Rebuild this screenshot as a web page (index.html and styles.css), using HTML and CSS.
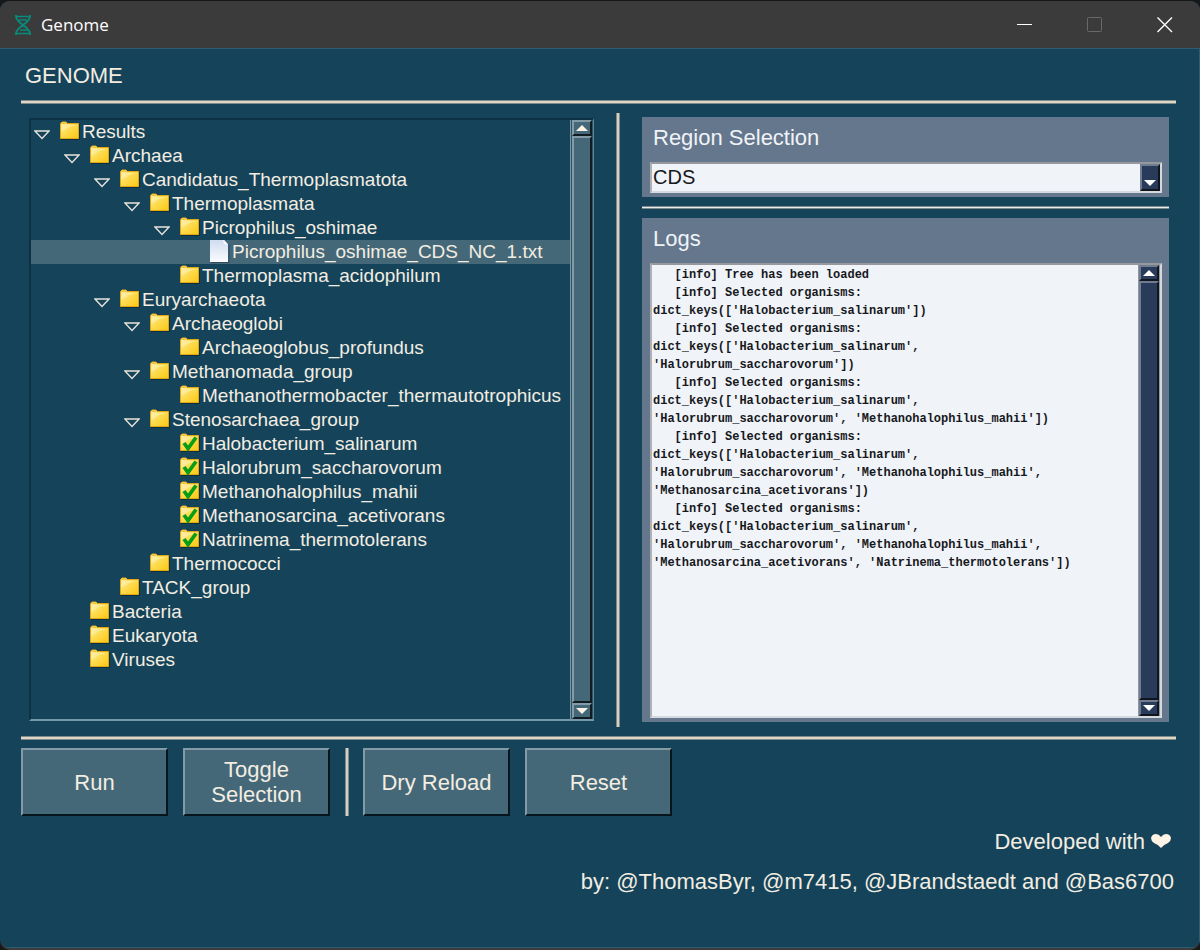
FILE: index.html
```
<!DOCTYPE html>
<html lang="en">
<head>
<meta charset="utf-8">
<meta name="viewport" content="width=device-width, initial-scale=1">
<title>Genome</title>
<link rel="stylesheet" href="styles.css">
</head>
<body>
<svg class="defs" aria-hidden="true">
  <defs>
    <linearGradient id="gold" x1="0" y1="0" x2="1" y2="1">
      <stop offset="0" stop-color="#fff0ad"/>
      <stop offset=".45" stop-color="#fddc55"/>
      <stop offset="1" stop-color="#fcc70f"/>
    </linearGradient>
    <linearGradient id="paper" x1="0" y1="0" x2="0" y2="1">
      <stop offset="0" stop-color="#cfdcf0"/>
      <stop offset="1" stop-color="#fbfcff"/>
    </linearGradient>
    <symbol id="folder" viewBox="0 0 20 24">
      <path d="M1 19.500H19.500V4" fill="none" stroke="#0d2f40"/>
      <path d="M.5 18.500V3.500L2 2H6L7.500 3.500H18.500V18.500Z" fill="url(#gold)" stroke="#e3a712"/>
      <path d="M1 2.500H6.500V4H1Z" fill="#f3c545"/>
      <path d="M1 11V6Q1 5 2 5H18Q10 6 7 8.500T1 11Z" fill="#fff3b5" opacity=".55"/>
    </symbol>
    <symbol id="checked" viewBox="0 0 20 24">
      <use href="#folder" width="20" height="24"/>
      <path d="M4 11L8 16.500L16 5.500" fill="none" stroke="#089d17" stroke-width="3.700"/>
    </symbol>
    <symbol id="file" viewBox="0 0 20 24">
      <path d="M1 22.500H19V4" fill="none" stroke="#30485a"/>
      <path d="M0 0H14L18 4V22H0Z" fill="url(#paper)"/>
      <path d="M13 0L14 4L18 5L14 0Z" fill="#f6f9ff"/>
    </symbol>
    <symbol id="open" viewBox="0 0 16 10">
      <path d="M1 1H15L8 8.500Z" fill="none" stroke="#e8e4dc" stroke-width="1.300"/>
    </symbol>
    <symbol id="up" viewBox="0 0 12 6"><path d="M0 6L6 0L12 6Z" fill="currentColor"/></symbol>
    <symbol id="down" viewBox="0 0 12 6"><path d="M0 0H12L6 6Z" fill="currentColor"/></symbol>
  </defs>
</svg>
<div class="window">
  <header class="titlebar">
    <svg class="dna" viewBox="0 0 16 20" fill="none" stroke="#078d7b" stroke-width="1.700" aria-hidden="true">
      <path d="M1 0V2Q2 6 8 10T15 18V20M15 0V2Q14 6 8 10T1 18V20M1 1.500H15M4 5H12M5 15H13M1 18.500H15"/>
    </svg>
    <span class="caption">Genome</span>
    <div class="controls">
      <button type="button" aria-label="Minimize"><svg viewBox="0 0 16 16"><path d="M0 7.500H15" stroke="#fff"/></svg></button>
      <button type="button" aria-label="Maximize" disabled><svg viewBox="0 0 16 16"><rect x=".5" y=".5" width="14" height="14" rx="1" fill="none" stroke="#696969"/></svg></button>
      <button type="button" aria-label="Close"><svg viewBox="0 0 16 16"><path d="M.5 .5L15 15M15 .5L.5 15" stroke="#fff" stroke-width="1.400"/></svg></button>
    </div>
  </header>

  <div class="content">
    <h1>GENOME</h1>
    <div class="rule"></div>
    <main class="workspace">
      <div class="treebox">
        <ul class="tree" role="tree" aria-label="Results">
          <li role="treeitem" class="d0"><svg class="arrow"><use href="#open"/></svg><svg class="icon"><use href="#folder"/></svg>Results</li>
          <li role="treeitem" class="d1"><svg class="arrow"><use href="#open"/></svg><svg class="icon"><use href="#folder"/></svg>Archaea</li>
          <li role="treeitem" class="d2"><svg class="arrow"><use href="#open"/></svg><svg class="icon"><use href="#folder"/></svg>Candidatus_Thermoplasmatota</li>
          <li role="treeitem" class="d3"><svg class="arrow"><use href="#open"/></svg><svg class="icon"><use href="#folder"/></svg>Thermoplasmata</li>
          <li role="treeitem" class="d4"><svg class="arrow"><use href="#open"/></svg><svg class="icon"><use href="#folder"/></svg>Picrophilus_oshimae</li>
          <li role="treeitem" class="d5 selected" aria-selected="true"><svg class="arrow"></svg><svg class="icon"><use href="#file"/></svg>Picrophilus_oshimae_CDS_NC_1.txt</li>
          <li role="treeitem" class="d4"><svg class="arrow"></svg><svg class="icon"><use href="#folder"/></svg>Thermoplasma_acidophilum</li>
          <li role="treeitem" class="d2"><svg class="arrow"><use href="#open"/></svg><svg class="icon"><use href="#folder"/></svg>Euryarchaeota</li>
          <li role="treeitem" class="d3"><svg class="arrow"><use href="#open"/></svg><svg class="icon"><use href="#folder"/></svg>Archaeoglobi</li>
          <li role="treeitem" class="d4"><svg class="arrow"></svg><svg class="icon"><use href="#folder"/></svg>Archaeoglobus_profundus</li>
          <li role="treeitem" class="d3"><svg class="arrow"><use href="#open"/></svg><svg class="icon"><use href="#folder"/></svg>Methanomada_group</li>
          <li role="treeitem" class="d4"><svg class="arrow"></svg><svg class="icon"><use href="#folder"/></svg>Methanothermobacter_thermautotrophicus</li>
          <li role="treeitem" class="d3"><svg class="arrow"><use href="#open"/></svg><svg class="icon"><use href="#folder"/></svg>Stenosarchaea_group</li>
          <li role="treeitem" class="d4"><svg class="arrow"></svg><svg class="icon"><use href="#checked"/></svg>Halobacterium_salinarum</li>
          <li role="treeitem" class="d4"><svg class="arrow"></svg><svg class="icon"><use href="#checked"/></svg>Halorubrum_saccharovorum</li>
          <li role="treeitem" class="d4"><svg class="arrow"></svg><svg class="icon"><use href="#checked"/></svg>Methanohalophilus_mahii</li>
          <li role="treeitem" class="d4"><svg class="arrow"></svg><svg class="icon"><use href="#checked"/></svg>Methanosarcina_acetivorans</li>
          <li role="treeitem" class="d4"><svg class="arrow"></svg><svg class="icon"><use href="#checked"/></svg>Natrinema_thermotolerans</li>
          <li role="treeitem" class="d3"><svg class="arrow"></svg><svg class="icon"><use href="#folder"/></svg>Thermococci</li>
          <li role="treeitem" class="d2"><svg class="arrow"></svg><svg class="icon"><use href="#folder"/></svg>TACK_group</li>
          <li role="treeitem" class="d1"><svg class="arrow"></svg><svg class="icon"><use href="#folder"/></svg>Bacteria</li>
          <li role="treeitem" class="d1"><svg class="arrow"></svg><svg class="icon"><use href="#folder"/></svg>Eukaryota</li>
          <li role="treeitem" class="d1"><svg class="arrow"></svg><svg class="icon"><use href="#folder"/></svg>Viruses</li>
        </ul>
        <div class="scrollbar">
          <button type="button" aria-label="Scroll tree up"><svg><use href="#up"/></svg></button>
          <div class="thumb"></div>
          <button type="button" aria-label="Scroll tree down"><svg><use href="#down"/></svg></button>
        </div>
      </div>

      <div class="divider"></div>

      <div class="side">
        <section class="panel">
          <label for="region">Region Selection</label>
          <div class="combo">
            <select id="region"><option>CDS</option></select>
            <span class="drop"><svg><use href="#down"/></svg></span>
          </div>
        </section>
        <div class="rule cool"></div>
        <section class="panel logs">
          <label for="log">Logs</label>
          <div class="logbox">
            <textarea id="log" readonly spellcheck="false">
   [info] Tree has been loaded
   [info] Selected organisms:
dict_keys(['Halobacterium_salinarum'])
   [info] Selected organisms:
dict_keys(['Halobacterium_salinarum',
'Halorubrum_saccharovorum'])
   [info] Selected organisms:
dict_keys(['Halobacterium_salinarum',
'Halorubrum_saccharovorum', 'Methanohalophilus_mahii'])
   [info] Selected organisms:
dict_keys(['Halobacterium_salinarum',
'Halorubrum_saccharovorum', 'Methanohalophilus_mahii',
'Methanosarcina_acetivorans'])
   [info] Selected organisms:
dict_keys(['Halobacterium_salinarum',
'Halorubrum_saccharovorum', 'Methanohalophilus_mahii',
'Methanosarcina_acetivorans', 'Natrinema_thermotolerans'])</textarea>
            <div class="scrollbar navy">
              <button type="button" aria-label="Scroll logs up"><svg><use href="#up"/></svg></button>
              <div class="thumb"></div>
              <button type="button" aria-label="Scroll logs down"><svg><use href="#down"/></svg></button>
            </div>
          </div>
        </section>
      </div>
    </main>
    <div class="rule"></div>
    <div class="actions">
      <button type="button">Run</button>
      <button type="button">Toggle Selection</button>
      <div class="divider"></div>
      <button type="button">Dry Reload</button>
      <button type="button">Reset</button>
    </div>
    <footer>
      <p class="love">Developed with <svg viewBox="0 0 20 14" role="img" aria-label="love"><path d="M10 14Q8 11 3 9Q0 7 0 4Q1 0 5 0Q8 0 10 3Q12 0 15 0Q19 0 20 4Q20 7 17 9Q12 11 10 14Z" fill="#fdf4e6"/></svg></p>
      <p>by: @ThomasByr, @m7415, @JBrandstaedt and @Bas6700</p>
    </footer>
  </div>
</div>
</body>
</html>
```
FILE: styles.css
```
* { box-sizing: border-box; }

body {
  margin: 0;
  background: #17181a;
  color: #f3ede2;
  font: 22px/25px "Liberation Sans", Arial, sans-serif;
}

button, select, textarea { margin: 0; border-radius: 0; font: inherit; color: inherit; }

.defs { position: absolute; width: 0; height: 0; }

.window {
  display: flex;
  flex-direction: column;
  min-height: 100vh;
  border-top: 1px solid #17181a;
  border-bottom: 2px solid #3b3b3b;
  border-radius: 10px;
  overflow: hidden;
  background: #15445a;
}

/* Title bar */
.titlebar {
  display: flex;
  align-items: center;
  height: 47px;
  padding-left: 15px;
  background: #3b3b3b;
  color: #fff;
  font: 17px/24px "Open Sans", "Noto Sans", sans-serif;
}
.dna { width: 16px; height: 20px; margin-right: 10px; }
.controls { display: flex; margin-left: auto; }
.controls button {
  display: flex;
  align-items: center;
  justify-content: center;
  width: 70px;
  height: 47px;
  padding: 0;
  border: 0;
  background: none;
}
.controls svg { width: 16px; height: 16px; }

/* Body */
.content {
  flex: 1;
  padding: 0 23px 0 21px;
  border: 1px solid #315b71;
  border-left: 0;
}
h1 {
  margin: 0;
  padding: 14px 4px 12px;
  font-size: 22px;
  font-weight: normal;
  line-height: 25px;
}
.rule {
  height: 4px;
  border: solid #7e8b8c;
  border-width: 1px 0;
  background: #e0d6c8;
}
.rule.cool { height: 3px; background: #e7ebee; }
.divider {
  width: 4px;
  border: solid #7e8b8c;
  border-width: 0 1px;
  background: #d8cfc2;
}

.workspace {
  display: grid;
  grid-template-columns: minmax(0, 565fr) 4px minmax(0, 527fr);
  column-gap: 22px;
  padding: 9px 7px 9px 8px;
}

/* Tree */
.treebox {
  display: flex;
  min-height: 603px;
  margin: 5px 0 6px;
  border: 2px solid;
  border-color: #0c3143 #5f8293 #7798a8 #0c3143;
  border-right-width: 1px;
}
.tree {
  flex: 1;
  min-width: 0;
  margin: 0;
  padding: 0;
  overflow: hidden;
  border-right: 1px solid #7895a2;
  list-style: none;
  font-size: 19px;
}
.tree li {
  display: flex;
  align-items: center;
  height: 24px;
  line-height: 26px;
  white-space: nowrap;
}
.tree .selected { background: #456878; }
.arrow { flex: none; width: 16px; height: 10px; margin: 6px 10px 0 3px; }
.icon { flex: none; width: 20px; height: 24px; margin-right: 2px; }
.d1 { padding-left: 30px; }
.d2 { padding-left: 60px; }
.d3 { padding-left: 90px; }
.d4 { padding-left: 120px; }
.d5 { padding-left: 150px; }

/* Scroll bars */
.scrollbar {
  display: flex;
  flex-direction: column;
  flex: none;
  width: 22px;
  padding: 0 1px;
  color: #fdf4e6;
  background: #315466;
}
.scrollbar button, .thumb {
  border: 2px solid;
  border-color: #829ba6 #101c22 #101c22 #829ba6;
  background: #456878;
}
.scrollbar button {
  display: flex;
  align-items: center;
  justify-content: center;
  height: 16px;
  padding: 0;
}
.scrollbar svg, .drop svg { width: 12px; height: 6px; }
.thumb { flex: 1; }
.scrollbar.navy { color: #fff; background: #91979f; }
.navy button, .navy .thumb {
  border-color: #707d91 #10151e #10151e #707d91;
  background: #283b5b;
}

/* Right column */
.side { display: flex; flex-direction: column; gap: 9px; padding: 4px 0 5px; }
.panel { padding: 8px 7px 4px 8px; background: #64778d; }
.panel label { display: block; padding: 0 3px; color: #f0f3f7; }
.combo { position: relative; height: 31px; margin-top: 12px; border: 2px solid; border-color: #96989d #d3d9de #d3d9de #b0b1b4; }
.combo select {
  display: block;
  width: 100%;
  height: 27px;
  padding: 0 22px 0 1px;
  border: 0;
  appearance: none;
  background: #f0f3f7;
  color: #16181d;
  font-size: 20px;
}
.drop {
  position: absolute;
  top: 0;
  right: 0;
  bottom: 0;
  display: flex;
  align-items: flex-end;
  justify-content: center;
  width: 20px;
  padding-bottom: 3px;
  border: 2px solid;
  border-color: #707d91 #10151e #10151e #707d91;
  background: #283b5b;
  color: #fff;
  pointer-events: none;
}
.logs { display: flex; flex: 1; flex-direction: column; }
.logbox {
  display: flex;
  flex: 1;
  margin-top: 12px;
  border: 2px solid;
  border-color: #96989d #d3d9de #d3d9de #b0b1b4;
}
.logbox textarea {
  flex: 1;
  min-width: 0;
  padding: 1px;
  border: 0;
  outline: 0;
  resize: none;
  overflow: hidden;
  background: #f0f3f7;
  color: #16181d;
  font: bold 12px/18px "Liberation Mono", "Courier New", monospace;
}

/* Buttons */
.actions { display: flex; gap: 15px; padding-top: 8px; }
.actions .divider { margin-right: -1px; }
.actions button {
  width: 147px;
  height: 68px;
  padding: 0 20px;
  border: 2px solid;
  border-color: #829ba6 #07151c #07151c #829ba6;
  background: #456878;
}
.actions button:nth-of-type(n+3) { padding: 0; }

footer { padding: 13px 2px 0 0; text-align: right; }
footer p { margin: 0 0 15px; }
.love { padding-right: 3px; }
.love svg { width: 20px; height: 14px; vertical-align: 1px; }
```
